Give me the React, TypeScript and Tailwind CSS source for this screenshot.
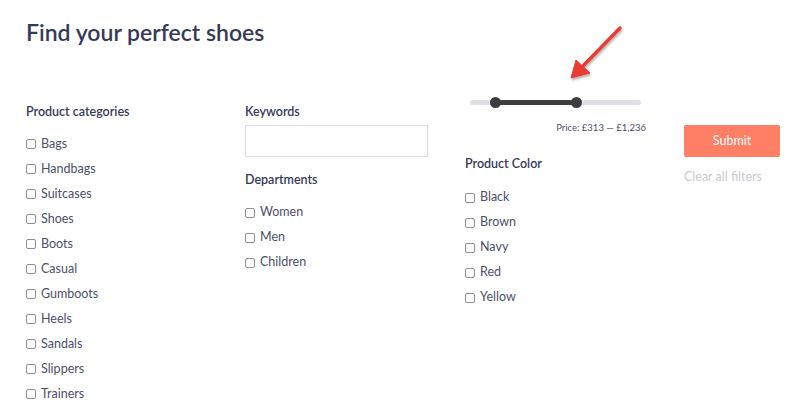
const categories = ['Bags', 'Handbags', 'Suitcases', 'Shoes', 'Boots', 'Casual', 'Gumboots', 'Heels', 'Sandals', 'Slippers', 'Trainers']
const departments = ['Women', 'Men', 'Children']
const colors = ['Black', 'Brown', 'Navy', 'Red', 'Yellow']

function Check({ label }: { label: string }) {
  return (
    <label className="flex h-[25px] items-center gap-[5px] text-[12.5px] text-[#4b4f6b]">
      <span className="h-[10px] w-[10px] rounded-[2px] border border-[#8f909a] bg-white" />
      {label}
    </label>
  )
}

function Heading({ children }: { children: string }) {
  return <h3 className="text-[12.5px] font-semibold leading-none text-[#363a58]">{children}</h3>
}

export default function App() {
  return (
    <div className="relative h-[409px] w-[805px] overflow-hidden bg-white font-['Lato',sans-serif]">
      <h1 className="pl-[26px] pt-[18px] text-[23px] font-semibold leading-[28px] text-[#363a58]">
        Find your perfect shoes
      </h1>

      <div className="mt-[60px] flex pl-[26px]">
        <div className="w-[219px]">
          <Heading>Product categories</Heading>
          <div className="mt-[13px] flex flex-col">
            {categories.map((c) => (
              <Check key={c} label={c} />
            ))}
          </div>
        </div>

        <div className="w-[220px]">
          <Heading>Keywords</Heading>
          <input className="mt-[6px] block h-[32px] w-[183px] border border-[#dcdce0] bg-white outline-none" />
          <div className="mt-[17px]">
            <Heading>Departments</Heading>
          </div>
          <div className="mt-[14px] flex flex-col">
            {departments.map((d) => (
              <Check key={d} label={d} />
            ))}
          </div>
        </div>

        <div className="w-[219px]">
          <div className="relative ml-[5px] mt-[-9px] h-[10px] w-[171px]">
            <div className="absolute left-0 right-0 top-[2.5px] h-[5px] rounded-full bg-[#dfdfe5]" />
            <div className="absolute left-[25px] top-[2.5px] h-[5px] w-[81px] bg-[#3d3d3f]" />
            <div className="absolute left-[20px] top-0 h-[11px] w-[11px] rounded-full bg-[#3d3d3f]" />
            <div className="absolute left-[101px] top-0 h-[11px] w-[11px] rounded-full bg-[#3d3d3f]" />
          </div>
          <p className="mt-[16px] w-[181px] text-right text-[9.5px] leading-none text-[#4b4f6b]">
            Price: £313 — £1,236
          </p>
          <div className="mt-[25px]">
            <Heading>Product Color</Heading>
          </div>
          <div className="mt-[15px] flex flex-col">
            {colors.map((c) => (
              <Check key={c} label={c} />
            ))}
          </div>
        </div>

        <div className="w-[96px]">
          <button className="mt-[19px] h-[32px] w-[96px] rounded-[2px] bg-[#ff7f66] text-[12.5px] text-white">
            Submit
          </button>
          <p className="mt-[14px] text-[12.5px] leading-none text-[#c9c9cf]">Clear all filters</p>
        </div>
      </div>

      <svg className="pointer-events-none absolute left-0 top-0" width="805" height="409">
        <defs>
          <filter id="sh" x="-50%" y="-50%" width="200%" height="200%">
            <feDropShadow dx="1" dy="2" stdDeviation="1.2" floodColor="#000" floodOpacity="0.3" />
          </filter>
        </defs>
        <g filter="url(#sh)" fill="#ea3b35" stroke="#ea3b35">
          <line x1="620" y1="28" x2="582" y2="67" strokeWidth="3.5" strokeLinecap="round" />
          <polygon points="571,78 576,60 590,73" strokeWidth="1" strokeLinejoin="round" />
        </g>
      </svg>
    </div>
  )
}
